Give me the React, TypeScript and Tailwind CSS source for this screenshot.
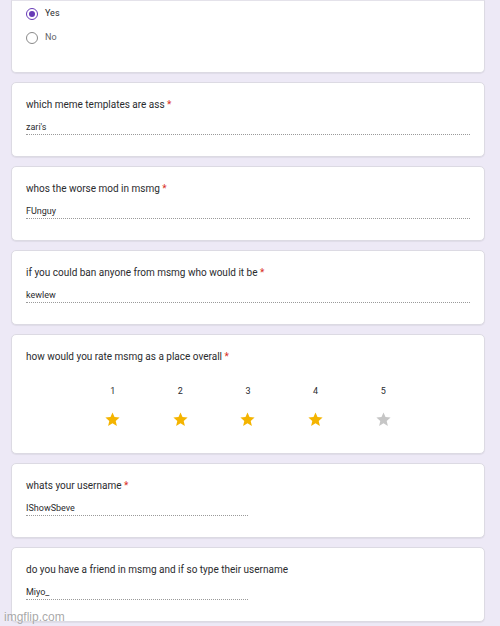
const font = { fontFamily: "Roboto, 'Noto Sans', Arial, sans-serif" };

function Card({ className = "", children }: { className?: string; children?: React.ReactNode }) {
  return (
    <div
      className={`w-[474px] shrink-0 rounded-[5px] border border-[#dcdae3] bg-white pl-[14px] pr-[14px] shadow-[0_1px_1px_rgba(0,0,0,0.06)] ${className}`}
    >
      {children}
    </div>
  );
}

function Question({ label, required = true }: { label: string; required?: boolean }) {
  return (
    <div className="text-[10px] leading-[12px] text-[#2a2b2e]">
      {label}
      {required && <span className="text-[#d93025]"> *</span>}
    </div>
  );
}

function TextAnswer({ label, value, short = false, required = true }: { label: string; value: string; short?: boolean; required?: boolean }) {
  return (
    <Card className="h-[75px] pt-[16px]">
      <Question label={label} required={required} />
      <div
        className={`mt-[11px] border-b border-dotted border-[#9a9a9a] pb-[1px] text-[9px] leading-[11px] text-[#2a2b2e] ${short ? "w-[222px]" : "w-full"}`}
      >
        {value}
      </div>
    </Card>
  );
}

function Star({ on }: { on: boolean }) {
  return (
    <svg width="17" height="17" viewBox="0 0 24 24">
      <path
        d="M12 17.27L18.18 21l-1.64-7.03L22 9.24l-7.19-.61L12 2 9.19 8.63 2 9.24l5.46 4.73L5.82 21z"
        fill={on ? "#f4b400" : "#c6c6c6"}
      />
    </svg>
  );
}

export default function App() {
  return (
    <div className="relative h-[626px] w-[500px] overflow-hidden bg-[#ede9f6]" style={font}>
      <div className="flex flex-col gap-[9px] pl-[11px]">
        <Card className="h-[73px] rounded-t-none border-t-[#e4e2ea] pt-[6px]">
          <div className="flex h-[14px] items-center gap-[7px]">
            <div className="flex h-[12px] w-[12px] items-center justify-center rounded-full border-[1.5px] border-[#673ab7]">
              <div className="h-[6px] w-[6px] rounded-full bg-[#673ab7]" />
            </div>
            <span className="text-[9px] text-[#2a2b2e]">Yes</span>
          </div>
          <div className="mt-[10px] flex h-[14px] items-center gap-[7px]">
            <div className="h-[12px] w-[12px] rounded-full border-[1.5px] border-[#8a8a8a]" />
            <span className="text-[9px] text-[#5f6368]">No</span>
          </div>
        </Card>
        <TextAnswer label="which meme templates are ass" value="zari's" />
        <TextAnswer label="whos the worse mod in msmg" value="FUnguy" />
        <TextAnswer label="if you could ban anyone from msmg who would it be" value="kewlew" />
        <Card className="h-[120px] pt-[16px]">
          <Question label="how would you rate msmg as a place overall" />
          <div className="ml-[53px] mt-[23px] grid w-[338px] grid-cols-5">
            {[1, 2, 3, 4, 5].map((n) => (
              <div key={n} className="flex flex-col items-center">
                <span className="text-[9px] leading-[11px] text-[#2a2b2e]">{n}</span>
                <div className="mt-[14px]">
                  <Star on={n < 5} />
                </div>
              </div>
            ))}
          </div>
        </Card>
        <TextAnswer label="whats your username" value="IShowSbeve" short />
        <TextAnswer
          label="do you have a friend in msmg and if so type their username"
          value="Miyo_"
          short
          required={false}
        />
      </div>
      <div className="absolute bottom-[2px] left-[4px] text-[12px] leading-[14px] text-[#9e9e9e]/90 [text-shadow:0_0_2px_rgba(255,255,255,0.6)]" style={{ fontFamily: "'Liberation Sans', Arial, sans-serif" }}>
        imgflip.com
      </div>
    </div>
  );
}
